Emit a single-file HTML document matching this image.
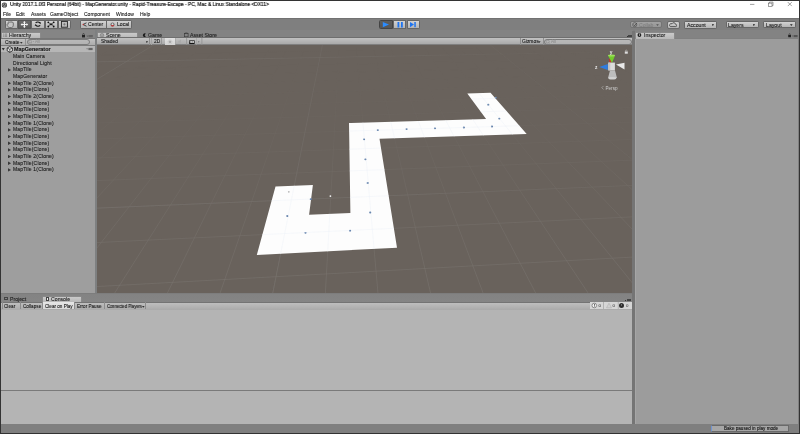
<!DOCTYPE html>
<html><head><meta charset="utf-8">
<style>
*{margin:0;padding:0;box-sizing:border-box}
html,body{width:800px;height:434px;overflow:hidden;background:#808080}
body{position:relative;font-family:"Liberation Sans",sans-serif;color:#111}
.a{position:absolute}
.t{position:absolute;white-space:pre;line-height:1;font-size:5.2px;color:#1a1a1a;will-change:transform;-webkit-text-stroke:0.1px currentColor}
.btn{position:absolute;border:1px solid #666;border-radius:1.5px;background:linear-gradient(#d2d2d2,#b4b4b4)}
.btnd{position:absolute;border:1px solid #555;background:linear-gradient(#6a6a6a,#5a5a5a)}
.tab{position:absolute;background:linear-gradient(#cacaca,#b8b8b8);border:0.8px solid #8a8a8a;border-bottom:none;border-radius:1.5px 1.5px 0 0}
.arr{position:absolute;width:2.6px;height:1.8px;background:#222;clip-path:polygon(0 0,100% 0,50% 100%)}
.tri{position:absolute;width:3.4px;height:3.8px;background:#3a3a3a;clip-path:polygon(0 0,100% 50%,0 100%)}
</style></head><body>
<!-- window outer border -->
<div class="a" style="left:0;top:0;width:800px;height:434px;border:1px solid #3a3a3a"></div>
<!-- title bar -->
<div class="a" style="left:1px;top:1px;width:798px;height:17px;background:#fff"></div>
<svg class="a" style="left:1px;top:1.5px" width="7" height="6" viewBox="0 0 7 6"><circle cx="3.4" cy="3" r="2.6" fill="#2a2a2a"/><path d="M3.4 1.2l1.6 0.9v1.8l-1.6 0.9-1.6-0.9V2.1z" fill="none" stroke="#eee" stroke-width="0.5"/><path d="M3.4 3v1.8M3.4 3l1.5-0.8M3.4 3l-1.5-0.8" stroke="#eee" stroke-width="0.4"/></svg>
<div class="t" id="title" style="left:10px;top:2px;font-size:5.4px;color:#111;transform-origin:0 0;transform:scaleX(0.901);-webkit-text-stroke:0.18px #111">Unity 2017.1.0f3 Personal (64bit) - MapGenerator.unity - Rapid-Treasure-Escape - PC, Mac &amp; Linux Standalone &lt;DX11&gt;</div>
<svg class="a" style="left:745px;top:0" width="55" height="10" viewBox="745 0 55 10">
 <path d="M750 4.4h4.4" stroke="#555" stroke-width="0.55"/>
 <rect x="768.4" y="3.1" width="3.6" height="3.6" fill="none" stroke="#555" stroke-width="0.55"/>
 <path d="M769.4 3.1V2.1h3.6v3.6h-1" fill="none" stroke="#555" stroke-width="0.55"/>
 <path d="M787.8 2.1l4 4M791.8 2.1l-4 4" stroke="#555" stroke-width="0.55"/>
</svg>
<!-- menu -->
<div class="t" style="left:3px;top:11.5px;font-size:5px">File</div>
<div class="t" style="left:16px;top:11.5px;font-size:5px">Edit</div>
<div class="t" style="left:30.5px;top:11.5px;font-size:5px">Assets</div>
<div class="t" style="left:50px;top:11.5px;font-size:5px">GameObject</div>
<div class="t" style="left:83.5px;top:11.5px;font-size:5px">Component</div>
<div class="t" style="left:116px;top:11.5px;font-size:5px">Window</div>
<div class="t" style="left:140px;top:11.5px;font-size:5px">Help</div>

<!-- toolbar -->
<div class="a" style="left:1px;top:17.6px;width:798px;height:13.4px;background:#7f7f7f;border-top:1px solid #727272"></div>
<!-- tools -->
<div class="btn" style="left:4.5px;top:20px;width:13px;height:9px;border-radius:1.5px 0 0 1.5px"></div>
<div class="btnd" style="left:17.5px;top:20px;width:13.5px;height:9px"></div>
<div class="btn" style="left:31px;top:20px;width:13.5px;height:9px;border-radius:0"></div>
<div class="btn" style="left:44.5px;top:20px;width:13px;height:9px;border-radius:0"></div>
<div class="btn" style="left:57.5px;top:20px;width:13px;height:9px;border-radius:0 1.5px 1.5px 0"></div>
<svg class="a" style="left:0;top:16px" width="80" height="16" viewBox="0 16 80 16">
 <path d="M9.3 27.5c-1.3-0.5-2.2-1.6-2.2-2.8 0-0.7 0.6-1 1.1-0.6v-1.6c0-0.9 1-1 1.2-0.2 0.2-0.8 1.2-0.8 1.4 0 0.3-0.7 1.3-0.6 1.3 0.2 0.4-0.5 1.2-0.3 1.2 0.4v2.2c0 1.4-0.8 2.3-1.8 2.5z" fill="#c6c6c6" stroke="#5a5a5a" stroke-width="0.8"/>
 <path d="M24.4 22v5M21.8 24.5h5.2" stroke="#f4f4f4" stroke-width="1.2"/>
 <path d="M22.9 22.6l1.5-1.6 1.5 1.6zM22.9 26.4l1.5 1.6 1.5-1.6zM22.3 23l-1.7 1.5 1.7 1.5zM26.5 23l1.7 1.5-1.7 1.5z" fill="#f4f4f4"/>
 <path d="M35.6 23a2.6 2.2 0 0 1 4.4 0" stroke="#111" stroke-width="1.05" fill="none"/>
 <path d="M40.2 25.3a2.6 2.2 0 0 1-4.4 0" stroke="#111" stroke-width="1.05" fill="none"/>
 <path d="M38.9 22.6l2.2-0.2-0.8 1.9z" fill="#111"/>
 <path d="M36.9 25.6l-2.2 0.2 0.8-1.9z" fill="#111"/>
 <path d="M48.3 22.3L53.7 26.5M53.7 22.3L48.3 26.5" stroke="#222" stroke-width="0.45"/>
 <rect x="49.6" y="23.5" width="2.9" height="1.6" fill="#1a1a1a"/>
 <circle cx="48.3" cy="22.3" r="0.9" fill="#111"/><circle cx="53.7" cy="22.3" r="0.9" fill="#111"/>
 <circle cx="48.3" cy="26.5" r="0.9" fill="#111"/><circle cx="53.7" cy="26.5" r="0.9" fill="#111"/>
 <rect x="61.4" y="21.4" width="6" height="5.8" fill="#bdbdbd" stroke="#222" stroke-width="0.9"/>
 <path d="M64.4 23v2.6M63.1 24.3h2.6" stroke="#555" stroke-width="0.5"/>
</svg>
<!-- center/local -->
<div class="btn" style="left:79.5px;top:20px;width:27px;height:9px;border-radius:1.5px 0 0 1.5px"></div>
<div class="btn" style="left:106px;top:20px;width:26px;height:9px;border-radius:0 1.5px 1.5px 0"></div>
<svg class="a" style="left:81.8px;top:22px" width="6" height="5" viewBox="0 0 6 5"><path d="M4.5 0.8L1 2.5l3.5 1.7" stroke="#222" stroke-width="0.8" fill="none"/><circle cx="1.2" cy="2.5" r="0.7" fill="#c33"/></svg>
<div class="t" style="left:87.8px;top:22.4px;font-size:5.1px">Center</div>
<svg class="a" style="left:110px;top:21.8px" width="5" height="5" viewBox="0 0 5 5"><circle cx="2.5" cy="2.5" r="2" fill="#666"/><circle cx="2.5" cy="2.2" r="1" fill="#ddd"/><path d="M0.6 3.2a2 2 0 0 0 3.8 0z" fill="#c33"/></svg>
<div class="t" style="left:116.6px;top:22.4px;font-size:5.1px">Local</div>
<!-- play -->
<div class="btnd" style="left:379px;top:20px;width:13.7px;height:9px;border-radius:1.5px 0 0 1.5px;border-color:#444;background:linear-gradient(#5e5e5e,#555)"></div>
<div class="btn" style="left:392.7px;top:20px;width:13.8px;height:9px;border-radius:0"></div>
<div class="btn" style="left:406.5px;top:20px;width:13px;height:9px;border-radius:0 1.5px 1.5px 0"></div>
<svg class="a" style="left:379px;top:20px" width="41" height="9" viewBox="0 0 41 9">
 <path d="M3.8 1.9L10 4.6 3.8 7.3z" fill="#2a8cff"/>
 <rect x="18.5" y="2" width="1.8" height="5.5" fill="#1e74f0"/><rect x="22" y="2" width="1.8" height="5.5" fill="#1e74f0"/>
 <path d="M31 2l4 2.6-4 2.6z" fill="#1e74f0"/><rect x="35.3" y="2" width="1.5" height="5.2" fill="#1e74f0"/>
</svg>
<!-- right toolbar -->
<div class="btn" style="left:630px;top:21.2px;width:31.6px;height:7.3px;background:linear-gradient(#a2a2a2,#969696);border-color:#747474;border-radius:2px"></div>
<svg class="a" style="left:632.3px;top:22.3px" width="6" height="6" viewBox="0 0 6 6"><circle cx="2.7" cy="2.7" r="2.1" fill="none" stroke="#555" stroke-width="0.7"/><path d="M1.6 2.6l1 1.1 2.4-2.8" stroke="#444" stroke-width="0.8" fill="none"/></svg>
<div class="t" style="left:639px;top:22.6px;font-size:5.1px;color:#7a7a7a;-webkit-text-stroke:0">Collab</div>
<div class="arr" style="left:656.2px;top:24.3px;background:#555"></div>
<div class="btn" style="left:666.5px;top:21px;width:13px;height:7.6px;background:linear-gradient(#d0d0d0,#b8b8b8);border-color:#6a6a6a;border-radius:2px"></div>
<svg class="a" style="left:669px;top:22px" width="8" height="6" viewBox="0 0 8 6"><path d="M1.4 4.6h5.2a1.1 1.1 0 0 0 0-2.2 1.9 1.9 0 0 0-3.6-0.6 1.3 1.3 0 0 0-1.6 2.8z" fill="none" stroke="#222" stroke-width="0.65"/></svg>
<div class="btn" style="left:683.5px;top:21px;width:33.5px;height:7.5px"></div>
<div class="t" style="left:686.5px;top:22.6px;font-size:5.2px">Account</div>
<div class="arr" style="left:711.5px;top:24.2px"></div>
<div class="btn" style="left:725.5px;top:20.8px;width:33px;height:7.7px"></div>
<div class="t" style="left:728px;top:22.6px;font-size:5.2px">Layers</div>
<div class="arr" style="left:752.5px;top:24.2px"></div>
<div class="btn" style="left:763px;top:20.8px;width:33px;height:7.7px"></div>
<div class="t" style="left:765.5px;top:22.6px;font-size:5.2px">Layout</div>
<div class="arr" style="left:790px;top:24.2px"></div>

<!-- ============ HIERARCHY ============ -->
<div class="a" style="left:1px;top:30px;width:94px;height:8px;background:#858585"></div>
<div class="tab" style="left:1px;top:32px;width:40px;height:6px"></div>
<svg class="a" style="left:0;top:30px" width="100" height="24" viewBox="0 30 100 24">
 <path d="M3.2 34h1M3.2 35.2h1M3.2 36.4h1M4.8 34h2.4M4.8 35.2h2.4M4.8 36.4h2.4" stroke="#666" stroke-width="0.6"/>
 <rect x="82" y="35" width="3" height="2.4" fill="#222"/>
 <path d="M82.7 35.1v-0.8a0.8 0.8 0 0 1 1.6 0v0.8" stroke="#222" stroke-width="0.5" fill="none"/>
 <path d="M86.5 35.8h1.6l-0.8 0.9z" fill="#444"/>
 <rect x="88.5" y="35" width="4.2" height="2.2" fill="#555"/>
 <path d="M88.5 35.7h4.2M88.5 36.4h4.2" stroke="#999" stroke-width="0.25"/>
</svg>
<div class="t" style="left:9px;top:33.3px;font-size:5.2px;color:#222">Hierarchy</div>
<div class="a" style="left:1px;top:38px;width:94px;height:7.5px;background:linear-gradient(#c0c0c0,#acacac);border-top:0.8px solid #767676;border-bottom:1px solid #7c7c7c"></div>
<div class="t" style="left:5px;top:40.7px;font-size:4.8px">Create</div>
<div class="arr" style="left:20px;top:42px;background:#333"></div>
<div class="a" style="left:25px;top:38.5px;width:0.7px;height:6.5px;background:#8f8f8f"></div>
<div class="a" style="left:27px;top:39.3px;width:62.5px;height:5.3px;background:linear-gradient(#b8b8b8,#b2b2b2);border:0.6px solid #7a7a7a;border-radius:3px"></div>
<svg class="a" style="left:28px;top:39.3px" width="8" height="6" viewBox="0 0 8 6"><circle cx="2.2" cy="2.6" r="1.4" fill="none" stroke="#8a8a8a" stroke-width="0.6"/><path d="M3.2 3.6l0.8 0.8" stroke="#8a8a8a" stroke-width="0.6"/><path d="M4.6 2.2h1.6l-0.8 0.9z" fill="#8a8a8a"/></svg>
<div class="t" style="left:34.5px;top:40.2px;font-size:4.6px;color:#8c8c8c;-webkit-text-stroke:0">All</div>
<div class="a" style="left:1px;top:45.5px;width:94px;height:247.7px;background:#9e9e9e"></div>
<div class="a" style="left:95px;top:30px;width:1.8px;height:264px;background:#7e8081"></div>
<div class="a" style="left:1px;top:45.5px;width:94px;height:6.7px;background:#b6b6b6"></div>
<svg class="a" style="left:0;top:45px" width="100" height="8" viewBox="0 45 100 8">
 <path d="M1.8 48.1h3l-1.5 2.4z" fill="#333"/>
 <path d="M86.3 48.6h1.6l-0.8 0.9z" fill="#555"/>
 <rect x="88.4" y="47.9" width="4.2" height="2.2" fill="#666"/>
 <path d="M9.8 46.6l2.6 1.4v2.9l-2.6 1.4-2.6-1.4V48z" fill="#e8e8e8" stroke="#111" stroke-width="0.75"/>
 <path d="M9.8 49.3v3M9.8 49.3l2.5-1.3M9.8 49.3l-2.5-1.3" stroke="#111" stroke-width="0.6"/>
</svg>
<div class="t" style="left:14px;top:47px;font-size:5.4px;font-weight:bold;color:#111">MapGenerator</div>
<div class="t" style="left:12.5px;top:54.05px;font-size:5px;letter-spacing:0.17px">Main Camera</div>
<div class="t" style="left:12.5px;top:60.72px;font-size:5px;letter-spacing:0.17px">Directional Light</div>
<div class="t" style="left:12.5px;top:67.39px;font-size:5px;letter-spacing:0.17px">MapTile</div>
<div class="tri" style="left:7.7px;top:67.99px"></div>
<div class="t" style="left:12.5px;top:74.06px;font-size:5px;letter-spacing:0.17px">MapGenerator</div>
<div class="t" style="left:12.5px;top:80.73px;font-size:5px;letter-spacing:0.17px">MapTile 2(Clone)</div>
<div class="tri" style="left:7.7px;top:81.33px"></div>
<div class="t" style="left:12.5px;top:87.40px;font-size:5px;letter-spacing:0.17px">MapTile(Clone)</div>
<div class="tri" style="left:7.7px;top:88.00px"></div>
<div class="t" style="left:12.5px;top:94.07px;font-size:5px;letter-spacing:0.17px">MapTile 2(Clone)</div>
<div class="tri" style="left:7.7px;top:94.67px"></div>
<div class="t" style="left:12.5px;top:100.74px;font-size:5px;letter-spacing:0.17px">MapTile(Clone)</div>
<div class="tri" style="left:7.7px;top:101.34px"></div>
<div class="t" style="left:12.5px;top:107.41px;font-size:5px;letter-spacing:0.17px">MapTile(Clone)</div>
<div class="tri" style="left:7.7px;top:108.01px"></div>
<div class="t" style="left:12.5px;top:114.08px;font-size:5px;letter-spacing:0.17px">MapTile(Clone)</div>
<div class="tri" style="left:7.7px;top:114.68px"></div>
<div class="t" style="left:12.5px;top:120.75px;font-size:5px;letter-spacing:0.17px">MapTile 1(Clone)</div>
<div class="tri" style="left:7.7px;top:121.35px"></div>
<div class="t" style="left:12.5px;top:127.42px;font-size:5px;letter-spacing:0.17px">MapTile(Clone)</div>
<div class="tri" style="left:7.7px;top:128.02px"></div>
<div class="t" style="left:12.5px;top:134.09px;font-size:5px;letter-spacing:0.17px">MapTile(Clone)</div>
<div class="tri" style="left:7.7px;top:134.69px"></div>
<div class="t" style="left:12.5px;top:140.76px;font-size:5px;letter-spacing:0.17px">MapTile(Clone)</div>
<div class="tri" style="left:7.7px;top:141.36px"></div>
<div class="t" style="left:12.5px;top:147.43px;font-size:5px;letter-spacing:0.17px">MapTile(Clone)</div>
<div class="tri" style="left:7.7px;top:148.03px"></div>
<div class="t" style="left:12.5px;top:154.10px;font-size:5px;letter-spacing:0.17px">MapTile 2(Clone)</div>
<div class="tri" style="left:7.7px;top:154.70px"></div>
<div class="t" style="left:12.5px;top:160.77px;font-size:5px;letter-spacing:0.17px">MapTile(Clone)</div>
<div class="tri" style="left:7.7px;top:161.37px"></div>
<div class="t" style="left:12.5px;top:167.44px;font-size:5px;letter-spacing:0.17px">MapTile 1(Clone)</div>
<div class="tri" style="left:7.7px;top:168.04px"></div>

<!-- ============ SCENE ============ -->
<div class="a" style="left:97px;top:30px;width:536px;height:8px;background:#838383"></div>
<div class="tab" style="left:97px;top:32px;width:40.6px;height:6px"></div>
<svg class="a" style="left:97px;top:31px" width="130" height="8" viewBox="97 31 130 8">
 <circle cx="102" cy="35.2" r="1.7" fill="none" stroke="#777" stroke-width="0.7"/>
 <path d="M102 32.8v4.8M99.6 35.2h4.8M100.3 33.5l3.4 3.4M103.7 33.5l-3.4 3.4" stroke="#888" stroke-width="0.4"/>
 <path d="M145.8 33.6a1.9 1.9 0 1 0 0 3.2l-1.2-1.6z" fill="#1a1a1a"/>
 <rect x="184.5" y="33.6" width="3.6" height="3.2" fill="none" stroke="#333" stroke-width="0.6"/>
 <path d="M185.3 33.6v-0.7h2v0.7" stroke="#333" stroke-width="0.5" fill="none"/>
</svg>
<div class="t" style="left:106px;top:33.3px;font-size:5.2px;color:#222">Scene</div>
<div class="t" style="left:148.3px;top:33.3px;font-size:5.2px;color:#222">Game</div>
<div class="t" style="left:190px;top:33.3px;font-size:5.2px;color:#222">Asset Store</div>
<div class="a" style="left:626.5px;top:35.8px;width:1px;height:0.6px;background:#333"></div>
<div class="a" style="left:628px;top:35px;width:4px;height:1.8px;background:#444"></div>
<div class="a" style="left:97px;top:37px;width:536px;height:8px;background:linear-gradient(#c2c2c2,#aaaaaa);border-top:0.8px solid #6f6f6f;border-bottom:0.5px solid #808080"></div>
<div class="t" style="left:101px;top:40.4px;font-size:4.9px">Shaded</div>
<div class="arr" style="left:145.5px;top:41.2px;background:#333"></div>
<div class="a" style="left:149.4px;top:37.5px;width:0.8px;height:7.5px;background:#8f8f8f"></div>
<div class="a" style="left:151.2px;top:37.5px;width:0.6px;height:7.5px;background:#a4a4a4"></div>
<div class="t" style="left:153.6px;top:40.4px;font-size:4.9px">2D</div>
<div class="a" style="left:164.6px;top:37.6px;width:10.6px;height:7.3px;background:linear-gradient(#e2e2e2,#d2d2d2)"></div>
<svg class="a" style="left:160px;top:37.5px" width="45" height="8" viewBox="160 37.5 45 8">
 <circle cx="170" cy="41.3" r="1.4" fill="#a9a9a9"/>
 <path d="M170 38.8v0.8M170 43v0.8M167.5 41.3h0.8M171.7 41.3h0.8M168.2 39.5l0.6 0.6M171.2 42.5l0.6 0.6M171.8 39.5l-0.6 0.6M168.8 42.5l-0.6 0.6" stroke="#b0b0b0" stroke-width="0.5"/>
 <path d="M178.3 40.3h1.1l1.7-1.5v5l-1.7-1.5h-1.1z" fill="#aaa"/>
 <path d="M182.2 39.8a2.2 2.2 0 0 1 0 3M183.3 39.2a3.2 3.2 0 0 1 0 4.2" stroke="#b0b0b0" stroke-width="0.45" fill="none"/>
 <rect x="189.2" y="39.8" width="5.4" height="3.8" fill="#151515"/>
 <path d="M189.8 42.2l1.6-1.4 1.2 1 1.4-1.2v1.6z" fill="#eee"/>
 <rect x="189.8" y="40.4" width="4.2" height="0.8" fill="#ddd"/>
 <path d="M198.2 41l1.2 0 -0.6 1z" fill="#333"/>
 <rect x="161" y="37.5" width="0.8" height="7.5" fill="#8f8f8f"/>
 <rect x="175.3" y="37.5" width="0.6" height="7.5" fill="#a0a0a0"/>
 <rect x="186.3" y="37.5" width="0.8" height="7.5" fill="#8f8f8f"/>
 <rect x="196.2" y="37.5" width="0.6" height="7.5" fill="#a0a0a0"/>
 <rect x="201.5" y="37.5" width="0.8" height="7.5" fill="#8f8f8f"/>
</svg>
<div class="a" style="left:519.5px;top:37.5px;width:0.8px;height:7.5px;background:#8f8f8f"></div>
<div class="t" style="left:521.5px;top:40.4px;font-size:4.9px">Gizmos</div>
<div class="arr" style="left:538px;top:41.2px;background:#333"></div>
<div class="a" style="left:542.5px;top:37.5px;width:0.8px;height:7.5px;background:#8f8f8f"></div>
<div class="a" style="left:544px;top:39px;width:88px;height:5.5px;background:linear-gradient(#b8b8b8,#b2b2b2);border:0.6px solid #7a7a7a;border-radius:3px"></div>
<svg class="a" style="left:545px;top:39px" width="12" height="6" viewBox="0 0 12 6"><circle cx="2.8" cy="2.6" r="1.5" fill="none" stroke="#888" stroke-width="0.6"/><path d="M3.9 3.7l1 1" stroke="#888" stroke-width="0.6"/></svg>
<div class="t" style="left:551px;top:40.2px;font-size:4.6px;color:#8a8a8a;-webkit-text-stroke:0">All</div>
<!-- viewport -->
<div class="a" style="left:97px;top:45px;width:536px;height:248.5px;background:#69625c;overflow:hidden">
<svg id="scene" width="536" height="249" viewBox="97 45 536 249" style="position:absolute;left:0;top:0">
<linearGradient id="gf" gradientUnits="userSpaceOnUse" x1="0" y1="45" x2="0" y2="293"><stop offset="0" stop-color="#fff" stop-opacity="0"/><stop offset="0.12" stop-color="#fff" stop-opacity="0.03"/><stop offset="0.4" stop-color="#fff" stop-opacity="0.3"/><stop offset="0.7" stop-color="#fff" stop-opacity="0.75"/><stop offset="1" stop-color="#fff" stop-opacity="1"/></linearGradient><mask id="gm" maskUnits="userSpaceOnUse" x="97" y="45" width="536" height="249"><rect x="97" y="45" width="536" height="249" fill="url(#gf)"/></mask>
<path d="M-2258.8 607.4L-69.2 36.6M-2119.9 596.6L-52.4 36.4M-1985.4 586.3L-35.8 36.1M-1855.0 576.2L-19.2 35.9M-1728.6 566.5L-2.7 35.6M-1606.1 557.0L13.8 35.4M-1487.2 547.9L30.1 35.1M-1371.7 539.0L46.3 34.9M-1259.6 530.3L62.5 34.6M-1150.7 521.9L78.6 34.4M-1044.9 513.8L94.6 34.2M-941.9 505.9L110.5 33.9M-841.8 498.1L126.4 33.7M-744.4 490.6L142.1 33.5M-649.6 483.3L157.8 33.2M-557.2 476.2L173.4 33.0M-467.3 469.3L189.0 32.8M-379.6 462.5L204.4 32.5M-294.2 455.9L219.8 32.3M-210.8 449.5L235.1 32.1M-129.6 443.2L250.3 31.9M-50.3 437.1L265.5 31.6M27.1 431.2L280.5 31.4M102.7 425.3L295.5 31.2M176.4 419.7L310.5 31.0M248.5 414.1L325.3 30.7M318.9 408.7L340.1 30.5M387.7 403.4L354.8 30.3M455.0 398.2L369.4 30.1M520.8 393.1L384.0 29.9M585.2 388.2L398.5 29.6M648.1 383.3L412.9 29.4M709.7 378.6L427.3 29.2M770.0 373.9L441.6 29.0M829.1 369.4L455.8 28.8M886.9 364.9L470.0 28.6M943.5 360.5L484.0 28.4M999.0 356.3L498.1 28.2M1053.3 352.1L512.0 28.0M1106.6 348.0L525.9 27.7M1158.8 343.9L539.7 27.5M1210.0 340.0L553.5 27.3M1260.2 336.1L567.2 27.1M1309.4 332.3L580.8 26.9M1357.7 328.6L594.4 26.7M1405.1 325.0L607.9 26.5M1451.6 321.4L621.3 26.3M1497.3 317.9L634.7 26.1M1542.1 314.4L648.0 25.9M1586.1 311.0L661.2 25.7M1629.3 307.7L674.4 25.5M1671.7 304.4L687.6 25.3M1713.4 301.2L700.6 25.1M1754.4 298.0L713.6 25.0M1794.7 294.9L726.6 24.8M-2244.4 495.2L1815.9 234.5M-1756.4 388.4L1654.9 200.9M-1423.1 315.5L1525.6 174.0M-1181.0 262.5L1419.6 151.9M-997.2 222.3L1331.0 133.5M-852.9 190.7L1256.0 117.9M-736.6 165.3L1191.5 104.5M-640.9 144.3L1135.6 92.8M-560.7 126.8L1086.6 82.6M-492.6 111.9L1043.4 73.6M-434.0 99.1L1004.9 65.6M-383.0 87.9L970.4 58.5M-338.3 78.1L939.4 52.0M-298.8 69.5L911.3 46.1M-263.6 61.8L885.8 40.8M-232.0 54.9L862.4 36.0M-203.6 48.7L841.0 31.5M-177.8 43.0L821.3 27.4" stroke="#78736e" stroke-width="0.6" fill="none" mask="url(#gm)"/>
<linearGradient id="gf2" gradientUnits="userSpaceOnUse" x1="97" y1="0" x2="633" y2="0"><stop offset="0" stop-color="#fff" stop-opacity="1"/><stop offset="0.6" stop-color="#fff" stop-opacity="0.6"/><stop offset="1" stop-color="#fff" stop-opacity="0.1"/></linearGradient><mask id="gm2" maskUnits="userSpaceOnUse" x="97" y="45" width="536" height="249"><rect x="97" y="45" width="536" height="249" fill="url(#gf2)"/></mask>
<path d="M-3027.6 666.6L-154.3 37.9M-1606.1 557.0L13.8 35.4M-557.2 476.2L173.4 33.0M248.5 414.1L325.3 30.7M886.9 364.9L470.0 28.6M1405.1 325.0L607.9 26.5M1834.2 291.9L739.5 24.6M-1181.0 262.5L1419.6 151.9M-298.8 69.5L911.3 46.1" stroke="#75706b" stroke-width="0.6" fill="none" mask="url(#gm2)"/>
<clipPath id="tc"><polygon points="256.8,254.9 275.5,186.5 312.9,185.0 309.1,214.8 350.4,213.0 349.0,123.0 486.1,118.9 467.3,93.4 490.5,92.8 526.7,133.9 379.5,138.7 397.0,247.7"/></clipPath>
<polygon points="256.8,254.9 275.5,186.5 312.9,185.0 309.1,214.8 350.4,213.0 349.0,123.0 486.1,118.9 467.3,93.4 490.5,92.8 526.7,133.9 379.5,138.7 397.0,247.7" fill="#fdfdfd"/>
<path d="M-2258.8 607.4L-69.2 36.6M-2119.9 596.6L-52.4 36.4M-1985.4 586.3L-35.8 36.1M-1855.0 576.2L-19.2 35.9M-1728.6 566.5L-2.7 35.6M-1606.1 557.0L13.8 35.4M-1487.2 547.9L30.1 35.1M-1371.7 539.0L46.3 34.9M-1259.6 530.3L62.5 34.6M-1150.7 521.9L78.6 34.4M-1044.9 513.8L94.6 34.2M-941.9 505.9L110.5 33.9M-841.8 498.1L126.4 33.7M-744.4 490.6L142.1 33.5M-649.6 483.3L157.8 33.2M-557.2 476.2L173.4 33.0M-467.3 469.3L189.0 32.8M-379.6 462.5L204.4 32.5M-294.2 455.9L219.8 32.3M-210.8 449.5L235.1 32.1M-129.6 443.2L250.3 31.9M-50.3 437.1L265.5 31.6M27.1 431.2L280.5 31.4M102.7 425.3L295.5 31.2M176.4 419.7L310.5 31.0M248.5 414.1L325.3 30.7M318.9 408.7L340.1 30.5M387.7 403.4L354.8 30.3M455.0 398.2L369.4 30.1M520.8 393.1L384.0 29.9M585.2 388.2L398.5 29.6M648.1 383.3L412.9 29.4M709.7 378.6L427.3 29.2M770.0 373.9L441.6 29.0M829.1 369.4L455.8 28.8M886.9 364.9L470.0 28.6M943.5 360.5L484.0 28.4M999.0 356.3L498.1 28.2M1053.3 352.1L512.0 28.0M1106.6 348.0L525.9 27.7M1158.8 343.9L539.7 27.5M1210.0 340.0L553.5 27.3M1260.2 336.1L567.2 27.1M1309.4 332.3L580.8 26.9M1357.7 328.6L594.4 26.7M1405.1 325.0L607.9 26.5M1451.6 321.4L621.3 26.3M1497.3 317.9L634.7 26.1M1542.1 314.4L648.0 25.9M1586.1 311.0L661.2 25.7M1629.3 307.7L674.4 25.5M1671.7 304.4L687.6 25.3M1713.4 301.2L700.6 25.1M1754.4 298.0L713.6 25.0M1794.7 294.9L726.6 24.8M-2244.4 495.2L1815.9 234.5M-1756.4 388.4L1654.9 200.9M-1423.1 315.5L1525.6 174.0M-1181.0 262.5L1419.6 151.9M-997.2 222.3L1331.0 133.5M-852.9 190.7L1256.0 117.9M-736.6 165.3L1191.5 104.5M-640.9 144.3L1135.6 92.8M-560.7 126.8L1086.6 82.6M-492.6 111.9L1043.4 73.6M-434.0 99.1L1004.9 65.6M-383.0 87.9L970.4 58.5M-338.3 78.1L939.4 52.0M-298.8 69.5L911.3 46.1M-263.6 61.8L885.8 40.8M-232.0 54.9L862.4 36.0M-203.6 48.7L841.0 31.5M-177.8 43.0L821.3 27.4" stroke="#eef3f9" stroke-width="0.5" fill="none" clip-path="url(#tc)"/>
<ellipse cx="310.8" cy="199.2" rx="1.05" ry="0.9" fill="#5f7ea8"/><ellipse cx="310.5" cy="198.89999999999998" rx="0.5" ry="0.4" fill="#a9bdd6"/>
<ellipse cx="287.3" cy="216" rx="1.05" ry="0.9" fill="#5f7ea8"/><ellipse cx="287.0" cy="215.7" rx="0.5" ry="0.4" fill="#a9bdd6"/>
<ellipse cx="305.5" cy="232.8" rx="1.05" ry="0.9" fill="#5f7ea8"/><ellipse cx="305.2" cy="232.5" rx="0.5" ry="0.4" fill="#a9bdd6"/>
<ellipse cx="350.1" cy="230.7" rx="1.05" ry="0.9" fill="#5f7ea8"/><ellipse cx="349.8" cy="230.39999999999998" rx="0.5" ry="0.4" fill="#a9bdd6"/>
<ellipse cx="370.2" cy="212.5" rx="1.05" ry="0.9" fill="#5f7ea8"/><ellipse cx="369.9" cy="212.2" rx="0.5" ry="0.4" fill="#a9bdd6"/>
<ellipse cx="367.7" cy="182.9" rx="1.05" ry="0.9" fill="#5f7ea8"/><ellipse cx="367.4" cy="182.6" rx="0.5" ry="0.4" fill="#a9bdd6"/>
<ellipse cx="365.4" cy="159.3" rx="1.05" ry="0.9" fill="#5f7ea8"/><ellipse cx="365.09999999999997" cy="159.0" rx="0.5" ry="0.4" fill="#a9bdd6"/>
<ellipse cx="364.1" cy="139.3" rx="1.05" ry="0.9" fill="#5f7ea8"/><ellipse cx="363.8" cy="139.0" rx="0.5" ry="0.4" fill="#a9bdd6"/>
<ellipse cx="377.8" cy="130.1" rx="1.05" ry="0.9" fill="#5f7ea8"/><ellipse cx="377.5" cy="129.79999999999998" rx="0.5" ry="0.4" fill="#a9bdd6"/>
<ellipse cx="406.6" cy="129.1" rx="1.05" ry="0.9" fill="#5f7ea8"/><ellipse cx="406.3" cy="128.79999999999998" rx="0.5" ry="0.4" fill="#a9bdd6"/>
<ellipse cx="435" cy="128.3" rx="1.05" ry="0.9" fill="#5f7ea8"/><ellipse cx="434.7" cy="128.0" rx="0.5" ry="0.4" fill="#a9bdd6"/>
<ellipse cx="463.9" cy="127.5" rx="1.05" ry="0.9" fill="#5f7ea8"/><ellipse cx="463.59999999999997" cy="127.2" rx="0.5" ry="0.4" fill="#a9bdd6"/>
<ellipse cx="492" cy="126.5" rx="1.05" ry="0.9" fill="#5f7ea8"/><ellipse cx="491.7" cy="126.2" rx="0.5" ry="0.4" fill="#a9bdd6"/>
<ellipse cx="499.3" cy="118.6" rx="1.05" ry="0.9" fill="#5f7ea8"/><ellipse cx="499.0" cy="118.3" rx="0.5" ry="0.4" fill="#a9bdd6"/>
<ellipse cx="488.3" cy="104.7" rx="1.05" ry="0.9" fill="#5f7ea8"/><ellipse cx="488.0" cy="104.4" rx="0.5" ry="0.4" fill="#a9bdd6"/>
<ellipse cx="495.9" cy="97.6" rx="1.05" ry="0.9" fill="#5f7ea8"/><ellipse cx="495.59999999999997" cy="97.3" rx="0.5" ry="0.4" fill="#a9bdd6"/>
<circle cx="288.8" cy="191.8" r="0.9" fill="#b8b8b8"/>
<circle cx="330.4" cy="196.1" r="0.9" fill="#f4f4f4"/>
</svg>
</div>

<svg class="a" style="left:590px;top:45px;will-change:transform" width="43" height="50" viewBox="590 45 43 50">
 <path d="M616 64.5L624.5 62.8v6.6z" fill="#e9e9e9"/>
 <path d="M610 70.5h5L617 78h-9z" fill="#bdbdbd"/>
 <ellipse cx="612.3" cy="78.3" rx="4" ry="1.3" fill="#d2d2d2"/>
 <path d="M609 59l2-0.5 0.8 4h-2.5z" fill="#c8322a"/>
 <path d="M608 55.5h7L612 63z" fill="#72cc2c"/>
 <ellipse cx="611.5" cy="55.5" rx="3.5" ry="1" fill="#9be05a"/>
 <rect x="608.3" y="62.6" width="6.6" height="7.8" fill="#dcdcdc"/>
 <rect x="608.3" y="62.6" width="2" height="7.8" fill="#c4c4c4"/>
 <path d="M599.3 67L607.8 64v6z" fill="#2f7ce0"/>
 <text x="609.8" y="53.6" font-size="4.8" fill="#e8e8e8" font-family="Liberation Sans" font-weight="bold">y</text>
 <text x="595" y="69" font-size="4.8" fill="#e8e8e8" font-family="Liberation Sans" font-weight="bold">z</text>
 <rect x="624.8" y="51.5" width="3" height="2.2" fill="#ddd"/>
 <path d="M625.5 51.6v-0.8a0.8 0.8 0 0 1 1.6 0v0.8" stroke="#ddd" stroke-width="0.4" fill="none"/>
 <path d="M603.6 85.9l-1.8 1.8 1.8 1.8" stroke="#ccc" stroke-width="0.5" fill="none"/>
 <text x="605.5" y="89.7" font-size="4.6" fill="#cfcfcf" font-family="Liberation Sans">Persp</text>
</svg>
<!-- ============ CONSOLE ============ -->
<div class="a" style="left:1px;top:293.2px;width:632px;height:8.8px;background:linear-gradient(#7a7a7a,#838383 1.5px,#858585)"></div>
<div class="a" style="left:4px;top:297px;width:3.5px;height:3px;border:0.6px solid #444"></div>
<div class="t" style="left:9.5px;top:296.8px;font-size:5.2px;color:#222">Project</div>
<div class="tab" style="left:42px;top:295.5px;width:40px;height:6.5px"></div>
<div class="a" style="left:46px;top:296.6px;width:3.2px;height:4.2px;border:0.6px solid #444;background:#eee"></div>
<div class="t" style="left:50.5px;top:296.8px;font-size:5.2px;color:#222">Console</div>
<div class="a" style="left:624.5px;top:300px;width:1px;height:0.6px;background:#333"></div>
<div class="a" style="left:626.5px;top:299.2px;width:4px;height:1.8px;background:#444"></div>
<div class="a" style="left:1px;top:301.5px;width:632px;height:9px;background:linear-gradient(#bebebe,#aaaaaa);border-top:0.8px solid #747474;border-bottom:1px solid #707070"></div>
<div class="a" style="left:1.5px;top:302px;width:0.8px;height:7.3px;background:#8c8c8c"></div>
<div class="t" style="left:4.4px;top:304.6px;font-size:4.6px;letter-spacing:0.05px">Clear</div>
<div class="a" style="left:19.6px;top:302px;width:0.9px;height:7.3px;background:#8c8c8c"></div>
<div class="t" style="left:22.6px;top:304.6px;font-size:4.6px;letter-spacing:0.05px">Collapse</div>
<div class="a" style="left:42px;top:302px;width:0.9px;height:7.3px;background:#8c8c8c"></div>
<div class="a" style="left:43px;top:302.2px;width:31.2px;height:7.1px;background:linear-gradient(#e6e6e6,#d8d8d8)"></div>
<div class="t" style="left:45px;top:304.6px;font-size:4.6px">Clear on Play</div>
<div class="a" style="left:74.3px;top:302px;width:0.9px;height:7.3px;background:#8c8c8c"></div>
<div class="t" style="left:77.2px;top:304.6px;font-size:4.6px">Error Pause</div>
<div class="a" style="left:103.8px;top:302px;width:0.9px;height:7.3px;background:#8c8c8c"></div>
<div class="t" style="left:106.5px;top:304.6px;font-size:4.6px;transform-origin:0 0;transform:scaleX(0.9)">Connected Players</div>
<div class="arr" style="left:142px;top:306px;background:#333"></div>
<div class="a" style="left:145.3px;top:302px;width:0.9px;height:7.3px;background:#8c8c8c"></div>
<div class="a" style="left:589.5px;top:302.3px;width:43.5px;height:7px;background:#d6d6d6"></div>
<svg class="a" style="left:589.5px;top:302.3px;will-change:transform" width="44" height="7" viewBox="0 0 44 7">
 <circle cx="4.3" cy="3.5" r="2.3" fill="#f2f2f2" stroke="#444" stroke-width="0.55"/><rect x="4" y="2" width="0.65" height="1.8" fill="#222"/><rect x="4" y="4.3" width="0.65" height="0.6" fill="#222"/>
 <text x="8.6" y="5.2" font-size="4.4" font-family="Liberation Sans" fill="#222">0</text>
 <path d="M19 1.2l-2.5 4.6h5z" fill="#d0d0d0" stroke="#a0a0a0" stroke-width="0.4"/>
 <text x="22.6" y="5.2" font-size="4.4" font-family="Liberation Sans" fill="#222">0</text>
 <circle cx="31.5" cy="3.5" r="2.5" fill="#2e2e2e"/><rect x="31.2" y="2" width="0.65" height="1.8" fill="#999"/>
 <text x="36.1" y="5.2" font-size="4.4" font-family="Liberation Sans" fill="#333">0</text>
 <rect x="13" y="0" width="0.8" height="7" fill="#a8a8a8"/><rect x="27.8" y="0" width="0.8" height="7" fill="#a8a8a8"/>
</svg>
<div class="a" style="left:1px;top:309.5px;width:632px;height:114.5px;background:#b4b4b4"></div>
<div class="a" style="left:1px;top:389.7px;width:632px;height:1.2px;background:#7a7a7a"></div>

<!-- ============ INSPECTOR ============ -->
<div class="a" style="left:635px;top:30px;width:163px;height:8px;background:#838383"></div>
<div class="tab" style="left:635px;top:32px;width:40px;height:6.5px"></div>
<svg class="a" style="left:635px;top:30px" width="165" height="9" viewBox="635 30 165 9">
 <circle cx="639.4" cy="35" r="1.9" fill="#222"/><rect x="639.1" y="34.1" width="0.6" height="1.9" fill="#ddd"/><rect x="639.1" y="33.3" width="0.6" height="0.5" fill="#ddd"/>
 <rect x="788.2" y="35" width="2.8" height="2.2" fill="#222"/>
 <path d="M788.9 35.1v-0.7a0.7 0.7 0 0 1 1.4 0v0.7" stroke="#222" stroke-width="0.45" fill="none"/>
 <path d="M791.8 35.8h1.4l-0.7 0.8z" fill="#444"/>
 <rect x="793.6" y="35" width="4" height="2.1" fill="#555"/>
</svg>
<div class="t" style="left:643.8px;top:33.3px;font-size:5.2px;color:#222">Inspector</div>
<div class="a" style="left:635px;top:38.5px;width:163px;height:385.5px;background:#9c9c9c"></div>
<div class="a" style="left:632.4px;top:31px;width:2.2px;height:393px;background:#757575"></div>
<div class="a" style="left:634.6px;top:38.5px;width:1px;height:385.5px;background:#a6a6a6"></div>

<!-- ============ STATUS ============ -->
<div class="a" style="left:1px;top:424px;width:798px;height:9px;background:#7f7f7f"></div>
<div class="a" style="left:711px;top:425.4px;width:77.8px;height:6.8px;background:#a6a6a6;border:0.6px solid #6a6a6a;border-left:1.5px solid #6f93d3"></div>
<div class="t" style="left:723.8px;top:426.6px;font-size:4.6px;color:#111">Bake paused in play mode</div>
<!-- border overlay -->
<div class="a" style="left:0;top:0;width:800px;height:434px;border:1px solid #333;pointer-events:none"></div>
</body></html>
